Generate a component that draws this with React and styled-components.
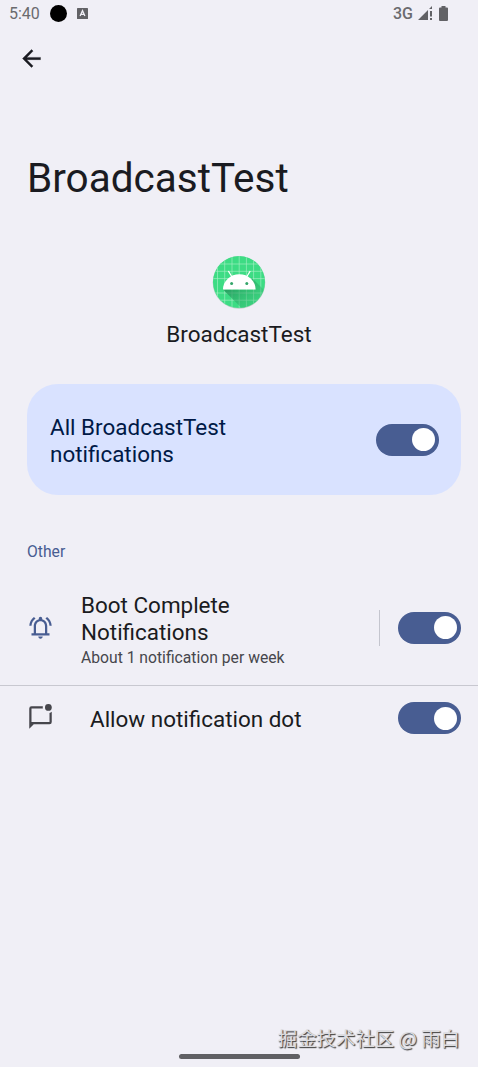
import React from "react"
import styled, { createGlobalStyle } from 'styled-components'

const GlobalStyle = createGlobalStyle`
  * {
    box-sizing: border-box;
  }
  body {
    margin: 0;
    background: #f0eff6;
  }
`;

const Screen = styled.div`
  position: relative;
  display: flex;
  flex-direction: column;
  width: 478px;
  height: 1067px;
  overflow: hidden;
  background: #f0eff6;
  color: #1a1b21;
  font-family: Roboto, "Noto Sans CJK SC", sans-serif;
`;

const StatusBar = styled.div`
  display: flex;
  align-items: center;
  justify-content: space-between;
  height: 28px;
  padding: 0 30px 1px 9px;
  color: #6a6a6e;
  font-size: 16px;
`;

const StatusGroup = styled.div`
  display: flex;
  align-items: center;
  gap: ${props => props.$gap}px;
  svg{
    display: block;
  }
`;

const Network = styled.span`
  margin-right: -1px;
  font-size: 16px;
  font-weight: 500;
`;

const CameraDot = styled.span`
  width: 17px;
  height: 17px;
  border-radius: 50%;
  background: #000;
`;

const TopBar = styled.div`
  display: flex;
  align-items: center;
  height: 61px;
  padding-left: 18px;
`;

const BackButton = styled.button`
  display: flex;
  padding: 0;
  border: none;
  background: none;
  color: #1a1b21;
`;

const Title = styled.h1`
  margin: 65px 0 0 27px;
  font-size: 40.5px;
  font-weight: 400;
  line-height: 48px;
`;

const AppHeader = styled.div`
  display: flex;
  flex-direction: column;
  align-items: center;
  margin-top: 53px;
  svg{
    display: block;
  }
`;

const AppName = styled.div`
  margin-top: 12px;
  font-size: 22.5px;
  line-height: 27px;
`;

const MainSwitch = styled.div`
  display: flex;
  align-items: center;
  justify-content: space-between;
  height: 111px;
  margin: 36px 17px 0 27px;
  padding: 0 22px 0 23px;
  border-radius: 31px;
  background: #d9e2ff;
  color: #001946;
`;

const Label = styled.div`
  padding-top: ${props => props.$top || 0}px;
  font-size: 22.45px;
  line-height: 27px;
`;

const Track = styled.span`
  display: flex;
  flex: none;
  align-items: center;
  justify-content: flex-end;
  width: 63px;
  height: 32px;
  padding-right: 4.5px;
  border-radius: 16px;
  background: #485d92;
`;

const Thumb = styled.span`
  width: 23px;
  height: 23px;
  border-radius: 50%;
  background: #fff;
`;

const SectionTitle = styled.h2`
  margin: 47px 0 0 27px;
  color: #485d92;
  font-size: 15.7px;
  font-weight: 400;
  line-height: 20px;
`;

const Row = styled.div`
  display: flex;
  align-items: center;
  height: ${props => props.$height}px;
  margin-top: ${props => props.$gap || 0}px;
  padding: 0 17px 0 27px;
`;

const RowIcon = styled.span`
  display: flex;
  flex: none;
  width: ${props => props.$width}px;
  padding-bottom: 1px;
  color: ${props => props.$color};
`;

const RowText = styled.div`
  flex: 1;
  padding-top: ${props => props.$top || 0}px;
`;

const Summary = styled.div`
  margin-top: 2px;
  color: #46464c;
  font-size: 15.7px;
  line-height: 20px;
`;

const Separator = styled.span`
  width: 1px;
  height: 36px;
  margin-right: 18px;
  background: #c4c5ce;
`;

const Divider = styled.div`
  height: 1px;
  background: #c8c8d0;
`;

const HomeHandle = styled.div`
  position: absolute;
  left: 179px;
  bottom: 8px;
  width: 121px;
  height: 5px;
  border-radius: 3px;
  background: #606064;
`;

const Watermark = styled.div`
  position: absolute;
  right: 18px;
  bottom: 15px;
  color: #dcdce0;
  font-family: "Noto Sans CJK SC", sans-serif;
  font-size: 19.4px;
  line-height: 28px;
  white-space: nowrap;
  text-shadow: 1px 1px 1px #444, 1px 1px 1px #999;
`;

const BackIcon = () => (
  <svg width="27" height="27" viewBox="0 0 24 24" fill="currentColor" stroke="currentColor" strokeWidth="0.3">
    <path d="M20 11H7.83l5.59-5.59L12 4l-8 8 8 8 1.41-1.41L7.83 13H20v-2z" />
  </svg>
)

const KeyboardIcon = () => (
  <svg width="11" height="11" viewBox="0 0 11 11">
    <rect width="11" height="11" rx="0.6" fill="#626266" />
    <path d="M3.1 8 5.5 2.7 7.9 8M4 6.3h3" fill="none" stroke="#f0eff6" strokeWidth="1.3" />
  </svg>
)

const SignalIcon = () => (
  <svg width="15" height="15" viewBox="0 0 15 15" fill="#626266">
    <path d="M0 14 10 4v10zM11 3l3-3v3zM12 5h2v5.5h-2zM12 12h2v2h-2z" />
  </svg>
)

const BatteryIcon = () => (
  <svg width="9" height="15" viewBox="0 0 9 15" fill="#626266">
    <path d="M2.5 0h4v1.5H8a1 1 0 0 1 1 1V14a1 1 0 0 1-1 1H1a1 1 0 0 1-1-1V2.5a1 1 0 0 1 1-1h1.5z" />
  </svg>
)

const BellIcon = () => (
  <svg width="27" height="27" viewBox="0 0 24 24" fill="currentColor">
    <path d="M7.58 4.08 6.15 2.65C3.75 4.48 2.17 7.3 2.03 10.5h2c.15-2.65 1.51-4.97 3.55-6.42zm12.39 6.42h2c-.15-3.2-1.73-6.02-4.12-7.85l-1.42 1.43c2.02 1.45 3.39 3.77 3.54 6.42zM18 11c0-3.07-1.63-5.64-4.5-6.32V4c0-.83-.67-1.5-1.5-1.5s-1.5.67-1.5 1.5v.68C7.64 5.36 6 7.92 6 11v6H4v2h16v-2h-2v-6zm-2 6H8v-6c0-2.48 1.51-4.5 4-4.5s4 2.02 4 4.5v6zM12 22c1.1 0 2-.9 2-2h-4c0 1.1.9 2 2 2z" />
  </svg>
)

const ChatDotIcon = () => (
  <svg width="27" height="27" viewBox="0 0 24 24" fill="currentColor">
    <path d="M20 16H4V4h10.1a5 5 0 0 1 0-2H4a2 2 0 0 0-2 2v18l4-4h14a2 2 0 0 0 2-2V6.98c-.58.44-1.26.77-2 .92z" />
    <circle cx="19" cy="3" r="3" />
  </svg>
)

const AppIcon = () => (
  <svg width="54" height="54" viewBox="0 0 54 54">
    <defs>
      <clipPath id="disc"><circle cx="27" cy="27" r="26" /></clipPath>
      <linearGradient id="shade" x1="20" y1="30" x2="40" y2="54" gradientUnits="userSpaceOnUse">
        <stop offset="0" stopColor="#218f57" stopOpacity="0.75" />
        <stop offset="1" stopColor="#32b870" stopOpacity="0.25" />
      </linearGradient>
    </defs>
    <circle cx="27" cy="27.5" r="26.3" fill="#b9cfc5" />
    <g clipPath="url(#disc)">
      <rect width="54" height="54" fill="#3ddc84" />
      <path
        d="M5.5 0v54M12.7 0v54M20 0v54M27.2 0v54M34.4 0v54M41.6 0v54M48.8 0v54M0 9h54M0 16.3h54M0 23.6h54M0 38h54M0 45.2h54"
        stroke="#a4efc5" strokeWidth="0.65"
      />
      <path d="M11 34.5 31 54.5h23V37L39 22l4.5 12.5z" fill="url(#shade)" />
      <path d="M11 34.5a16.3 15.3 0 0 1 32.6 0z" fill="#fff" />
      <path d="m20 22-3.4-5.6M34.6 22l3.4-5.6" stroke="#fff" strokeWidth="1.2" strokeLinecap="round" />
      <circle cx="19.6" cy="28.4" r="1.5" fill="#35a66a" />
      <circle cx="34.8" cy="28.4" r="1.5" fill="#35a66a" />
    </g>
  </svg>
)

const Switch = () => (
  <Track role="switch" aria-checked="true">
    <Thumb />
  </Track>
)

export default function App() {
  return (
    <Screen>
      <GlobalStyle />
      <StatusBar>
        <StatusGroup $gap={10}>
          <span>5:40</span>
          <CameraDot />
          <KeyboardIcon />
        </StatusGroup>
        <StatusGroup $gap={6}>
          <Network>3G</Network>
          <SignalIcon />
          <BatteryIcon />
        </StatusGroup>
      </StatusBar>
      <TopBar>
        <BackButton><BackIcon /></BackButton>
      </TopBar>
      <Title>BroadcastTest</Title>
      <AppHeader>
        <AppIcon />
        <AppName>BroadcastTest</AppName>
      </AppHeader>
      <MainSwitch>
        <Label $top={3}>All BroadcastTest<br />notifications</Label>
        <Switch />
      </MainSwitch>
      <SectionTitle>Other</SectionTitle>
      <Row $height={115} $gap={8}>
        <RowIcon $width={54} $color="#485d92"><BellIcon /></RowIcon>
        <RowText $top={4.5}>
          <Label>Boot Complete<br />Notifications</Label>
          <Summary>About 1 notification per week</Summary>
        </RowText>
        <Separator />
        <Switch />
      </Row>
      <Divider />
      <Row $height={64}>
        <RowIcon $width={63} $color="#46464c"><ChatDotIcon /></RowIcon>
        <RowText $top={3}>
          <Label>Allow notification dot</Label>
        </RowText>
        <Switch />
      </Row>
      <Watermark>掘金技术社区 @ 雨白</Watermark>
      <HomeHandle />
    </Screen>
  )
}
